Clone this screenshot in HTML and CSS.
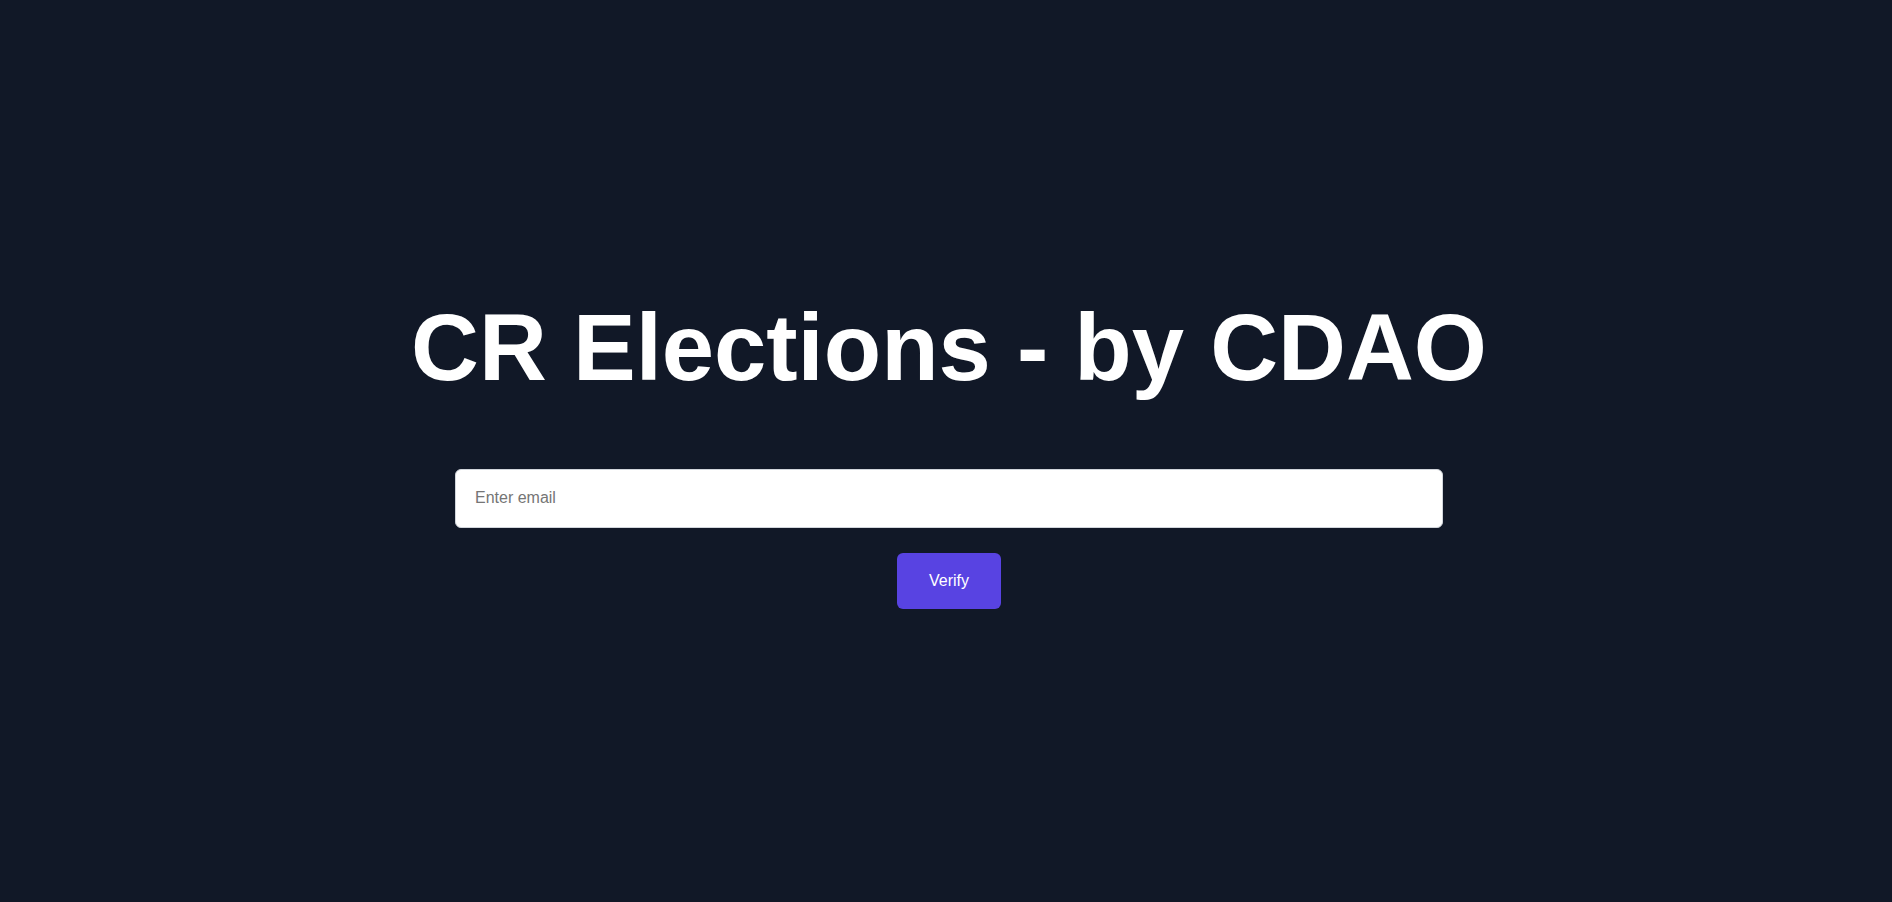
FILE: index.html
```html
<!DOCTYPE html>
<html lang="en">
<head>
<meta charset="utf-8">
<title>CR Elections - by CDAO</title>
<link rel="stylesheet" href="styles.css">
</head>
<body>
<main class="page">
  <h1 class="title">CR Elections - by CDAO</h1>
  <form class="form">
    <input class="email" type="email" placeholder="Enter email">
    <button class="verify" type="button">Verify</button>
  </form>
</main>
</body>
</html>
```
FILE: styles.css
```css
* { box-sizing: border-box; }
html, body { margin: 0; padding: 0; }
body {
  background: #111827;
  font-family: "Liberation Sans", Arial, sans-serif;
  color: #ffffff;
}
.page {
  min-height: 100vh;
  display: flex;
  flex-direction: column;
  align-items: center;
  justify-content: center;
  padding-top: 7px;
  padding-left: 6px;
}
.title {
  margin: 0 0 74px 0;
  font-size: 94px;
  line-height: 1;
  font-weight: 700;
  color: #ffffff;
  text-align: center;
}
.form {
  display: flex;
  flex-direction: column;
  align-items: center;
  gap: 25px;
  width: 988px;
}
.email {
  width: 100%;
  height: 59px;
  padding: 16px 19px;
  font-family: "Liberation Sans", Arial, sans-serif;
  font-size: 16px;
  line-height: 24px;
  color: #111827;
  background: #ffffff;
  border: 1px solid #d1d5db;
  border-radius: 6px;
  outline: none;
}
.email::placeholder { color: #757575; }
.verify {
  height: 56px;
  padding: 16px 32px;
  font-family: "Liberation Sans", Arial, sans-serif;
  font-size: 16px;
  line-height: 24px;
  color: #ffffff;
  background: #5843e2;
  border: none;
  border-radius: 6px;
  cursor: pointer;
}
```
